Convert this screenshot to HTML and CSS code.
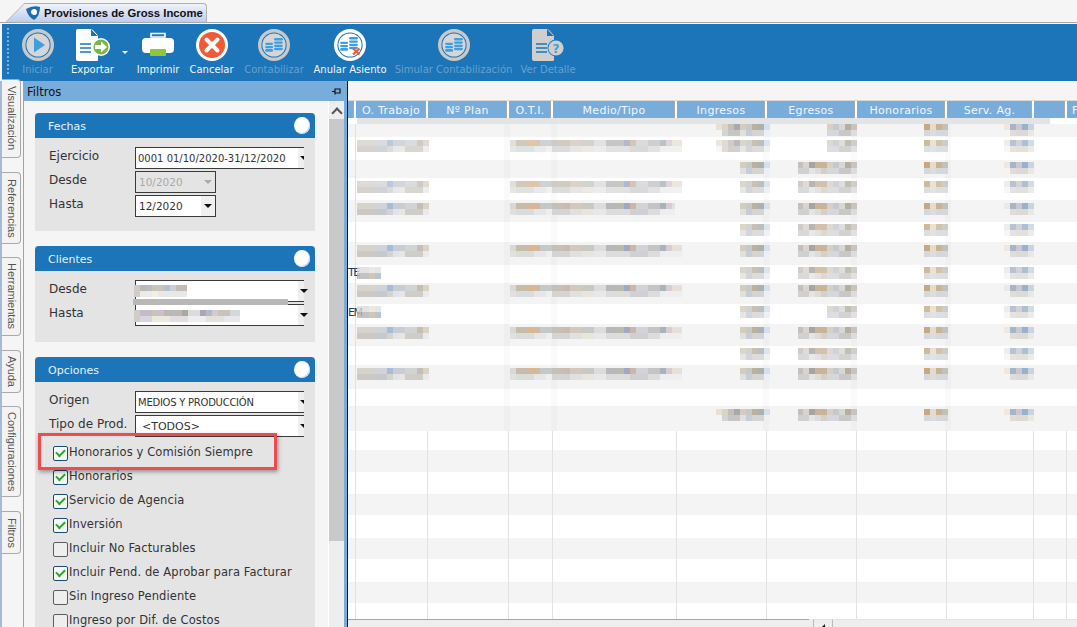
FILE: index.html
```html
<!DOCTYPE html>
<html lang="es">
<head>
<meta charset="utf-8">
<title>Provisiones de Gross Income</title>
<link rel="stylesheet" href="styles.css">
</head>
<body>
<svg class="defs" width="0" height="0" aria-hidden="true">
  <symbol id="coins" viewBox="0 0 20 18">
    <g fill="#3d9ee3">
      <rect x="0" y="6.4" width="9" height="2.6" rx="1.3"/><rect x="0" y="10" width="9" height="2.6" rx="1.3"/><rect x="0" y="13.6" width="9" height="3" rx="1.5"/>
      <rect x="10" y="1" width="10" height="3" rx="1.5"/><rect x="10" y="5" width="10" height="2.6" rx="1.3"/><rect x="10" y="8.6" width="10" height="2.6" rx="1.3"/><rect x="10" y="12.2" width="10" height="2.6" rx="1.3"/>
    </g>
  </symbol>
</svg>
<div class="app">
  <header class="tabbar">
    <div class="doc-tab">
      <svg class="tab-logo" viewBox="0 0 14 14"><path d="M0 3 Q7 -1 14 1 Q14 10 8 14 Q2 11 0 3Z" fill="#1c6fa8"/><path d="M5 5.5a3 3 0 1 1 3 3.5q-3-.5-3-3.5Z" fill="#fff"/></svg>
      <span>Provisiones de Gross Income</span>
    </div>
  </header>

  <nav class="toolbar">
    <div class="grip"></div>
    <div class="tool t-ini off">
      <svg viewBox="0 0 32 32"><circle cx="16" cy="16" r="16" fill="#c9c9c9"/><circle cx="16" cy="16" r="12.6" fill="#1c75b8"/><circle cx="16" cy="16" r="11.6" fill="#d6d6d6"/><path d="M12 8.5 23 16 12 23.5Z" fill="#3d9ee3"/></svg>
      <span>Iniciar</span>
    </div>
    <div class="tool t-exp">
      <svg viewBox="0 0 34 32"><path d="M2 0H15L22 7V31a1 1 0 0 1-1 1H2a2 2 0 0 1-2-2V2a2 2 0 0 1 2-2Z" fill="#fff"/><path d="M15 0 22 7H15Z" fill="#1c75b8"/><path d="M16 0.5 21.5 6.5" stroke="#fff"/><path d="M4 15H15M4 19H15M4 23H15" stroke="#1c75b8" stroke-width="1.4"/><circle cx="25" cy="18" r="9" fill="#fff"/><circle cx="25" cy="18" r="7.6" fill="#7ab648"/><path d="M19 16H25V12.5L31 18 25 23.5V20H19Z" fill="#fff"/></svg>
      <span>Exportar</span>
      <i class="caret"></i>
    </div>
    <div class="tool t-imp">
      <svg viewBox="0 0 32 32"><path d="M9 4.5H23V8H9Z" fill="none" stroke="#fff" stroke-width="1.6"/><rect x="0" y="9" width="32" height="15" rx="4" fill="#fff"/><rect x="8" y="20" width="16" height="7" rx="1" fill="#8dc63f"/></svg>
      <span>Imprimir</span>
    </div>
    <div class="tool t-can">
      <svg viewBox="0 0 32 32"><circle cx="16" cy="16" r="16" fill="#fff"/><circle cx="16" cy="16" r="13" fill="#f15a35"/><path d="M10.5 10.5 21.5 21.5M21.5 10.5 10.5 21.5" stroke="#fff" stroke-width="4" stroke-linecap="round"/></svg>
      <span>Cancelar</span>
    </div>
    <div class="tool t-con off">
      <svg viewBox="0 0 32 32"><circle cx="16" cy="16" r="16" fill="#c9c9c9"/><circle cx="16" cy="16" r="12.6" fill="#1c75b8"/><circle cx="16" cy="16" r="11.6" fill="#d6d6d6"/><use href="#coins" x="7" y="8" width="18" height="16"/></svg>
      <span>Contabilizar</span>
    </div>
    <div class="tool t-anu">
      <svg viewBox="0 0 32 32"><circle cx="16" cy="16" r="16" fill="#fff"/><circle cx="16" cy="16" r="12.6" fill="#1c75b8"/><circle cx="16" cy="16" r="11.6" fill="#fff"/><use href="#coins" x="6" y="7" width="18" height="16"/><path d="M19 19.5 25.5 25.5M25.5 19.5 19 25.5" stroke="#ef5a35" stroke-width="2.2"/></svg>
      <span>Anular Asiento</span>
    </div>
    <div class="tool t-sim off">
      <svg viewBox="0 0 32 32"><circle cx="16" cy="16" r="16" fill="#c9c9c9"/><circle cx="16" cy="16" r="12.6" fill="#1c75b8"/><circle cx="16" cy="16" r="11.6" fill="#d6d6d6"/><use href="#coins" x="7" y="8" width="18" height="16"/></svg>
      <span>Simular Contabilización</span>
    </div>
    <div class="tool t-ver off">
      <svg viewBox="0 0 32 32"><path d="M2 0H15L22 7V31a1 1 0 0 1-1 1H2a2 2 0 0 1-2-2V2a2 2 0 0 1 2-2Z" fill="#cfcfcf"/><path d="M15 0 22 7H15Z" fill="#1c75b8"/><path d="M16 0.5 21.5 6.5" stroke="#cfcfcf"/><path d="M4 15H15M4 19H15M4 23H15" stroke="#1c75b8" stroke-width="1.4"/><circle cx="24" cy="19" r="8.5" fill="#1c75b8"/><circle cx="24" cy="19" r="7.6" fill="#cfcfcf"/><text x="24" y="24" text-anchor="middle" class="qmark">?</text></svg>
      <span>Ver Detalle</span>
    </div>
  </nav>

  <main class="main">
    <aside class="side-tabs">
      <div class="vtab vt-vis">Visualización</div>
      <div class="vtab vt-ref">Referencias</div>
      <div class="vtab vt-her">Herramientas</div>
      <div class="vtab vt-ayu">Ayuda</div>
      <div class="vtab vt-cfg">Configuraciones</div>
      <div class="vtab vt-fil">Filtros</div>
    </aside>

    <section class="panel">
      <div class="panel-title">
        <span>Filtros</span>
        <svg class="pin" viewBox="0 0 9 9"><path d="M0 4.5H3M3 1.5V7.5M3 2H8V6H3" fill="none" stroke="#111" stroke-width="1.2"/></svg>
      </div>
      <div class="panel-body">
        <div class="cards">
          <div class="card card-fechas">
            <div class="card-head"><span>Fechas</span><i class="dot"></i></div>
            <div class="card-body">
              <div class="frow"><label>Ejercicio</label><div class="sel wide">0001 01/10/2020-31/12/2020<i class="drop"></i></div></div>
              <div class="frow"><label>Desde</label><div class="sel short disabled">10/2020<i class="drop"></i></div></div>
              <div class="frow"><label>Hasta</label><div class="sel short">12/2020<i class="drop"></i></div></div>
            </div>
          </div>

          <div class="card card-clientes">
            <div class="card-head"><span>Clientes</span><i class="dot"></i></div>
            <div class="card-body">
              <div class="frow"><label>Desde</label><div class="sel wide hidden-val"><b class="m m-c1"></b><i class="drop"></i></div></div>
              <div class="frow"><label>Hasta</label><div class="sel wide hidden-val"><b class="m m-c2"></b><i class="drop"></i></div></div>
              <div class="smudge"></div>
            </div>
          </div>

          <div class="card card-opciones">
            <div class="card-head"><span>Opciones</span><i class="dot"></i></div>
            <div class="card-body">
              <div class="frow"><label>Origen</label><div class="sel wide caps">MEDIOS Y PRODUCCIÓN<i class="drop"></i></div></div>
              <div class="frow"><label>Tipo de Prod.</label><div class="sel wide indent">&lt;TODOS&gt;<i class="drop"></i></div></div>
              <div class="checks">
                <div class="chk on">Honorarios y Comisión Siempre</div>
                <div class="chk on">Honorarios</div>
                <div class="chk on">Servicio de Agencia</div>
                <div class="chk on">Inversión</div>
                <div class="chk">Incluir No Facturables</div>
                <div class="chk on">Incluir Pend. de Aprobar para Facturar</div>
                <div class="chk">Sin Ingreso Pendiente</div>
                <div class="chk">Ingreso por Dif. de Costos</div>
              </div>
              <div class="callout"></div>
            </div>
          </div>
        </div>
        <div class="vscroll"><div class="vs-up"></div><div class="vs-thumb"></div></div>
      </div>
    </section>

    <div class="splitter"></div>

    <section class="grid">
      <div class="grid-head">
        <div></div><div>O. Trabajo</div><div>Nº Plan</div><div>O.T.I.</div><div>Medio/Tipo</div><div>Ingresos</div><div>Egresos</div><div>Honorarios</div><div>Serv. Ag.</div><div></div><div class="last">F</div>
      </div>
      <div class="grid-body">
        <div class="strip"></div>
        <div class="row g"><i></i><i></i><i></i><i class="c2"></i><i class="n"><b class="m ing wi"></b></i><i class="n"><b class="m egr se"></b></i><i class="n"><b class="m hon"></b></i><i class="n"><b class="m srv"></b></i><i></i><i></i></div>
        <div class="row w"><i></i><i><b class="m mt"></b></i><i></i><i class="c2"><b class="m mo"></b></i><i class="n"><b class="m ing wi"></b></i><i class="n"><b class="m egr se"></b></i><i class="n"><b class="m hon"></b></i><i class="n"><b class="m srv"></b></i><i></i><i></i></div>
        <div class="row g"><i></i><i></i><i></i><i class="c2"></i><i class="n"><b class="m ing"></b></i><i class="n"><b class="m egr"></b></i><i class="n"><b class="m hon"></b></i><i class="n"><b class="m srv"></b></i><i></i><i></i></div>
        <div class="row w"><i></i><i><b class="m mt"></b></i><i></i><i class="c2"><b class="m mo"></b></i><i class="n"><b class="m ing"></b></i><i class="n"><b class="m egr"></b></i><i class="n"><b class="m hon"></b></i><i class="n"><b class="m srv"></b></i><i></i><i></i></div>
        <div class="row g"><i></i><i><b class="m mt"></b></i><i></i><i class="c2"><b class="m mo sh"></b></i><i class="n"><b class="m ing"></b></i><i class="n"><b class="m egr"></b></i><i class="n"><b class="m hon"></b></i><i class="n"><b class="m srv"></b></i><i></i><i></i></div>
        <div class="row w"><i></i><i></i><i></i><i class="c2"></i><i class="n"><b class="m ing"></b></i><i class="n"><b class="m egr"></b></i><i class="n"><b class="m hon"></b></i><i class="n"><b class="m srv"></b></i><i></i><i></i></div>
        <div class="row g"><i></i><i><b class="m mt"></b></i><i></i><i class="c2"><b class="m mo"></b></i><i class="n"><b class="m ing"></b></i><i class="n"><b class="m egr"></b></i><i class="n"><b class="m hon"></b></i><i class="n"><b class="m srv"></b></i><i></i><i></i></div>
        <div class="row w"><i class="clip">TE</i><i><b class="m ms"></b></i><i></i><i class="c2"></i><i class="n"><b class="m ing"></b></i><i class="n"><b class="m egr"></b></i><i class="n"><b class="m hon"></b></i><i class="n"><b class="m srv"></b></i><i></i><i></i></div>
        <div class="row g"><i></i><i><b class="m mt"></b></i><i></i><i class="c2"><b class="m mo"></b></i><i class="n"><b class="m ing"></b></i><i class="n"><b class="m egr"></b></i><i class="n"><b class="m hon"></b></i><i class="n"><b class="m srv"></b></i><i></i><i></i></div>
        <div class="row w"><i class="clip">EM</i><i><b class="m ms"></b></i><i></i><i class="c2"></i><i class="n"><b class="m ing"></b></i><i class="n"><b class="m egr se"></b></i><i class="n"><b class="m hon"></b></i><i class="n"><b class="m srv"></b></i><i></i><i></i></div>
        <div class="row g"><i></i><i><b class="m mt"></b></i><i></i><i class="c2"><b class="m mo"></b></i><i class="n"><b class="m ing"></b></i><i class="n"><b class="m egr"></b></i><i class="n"><b class="m hon"></b></i><i class="n"><b class="m srv"></b></i><i></i><i></i></div>
        <div class="row w"><i></i><i></i><i></i><i class="c2"></i><i class="n"><b class="m ing"></b></i><i class="n"><b class="m egr"></b></i><i class="n"><b class="m hon"></b></i><i class="n"><b class="m srv"></b></i><i></i><i></i></div>
        <div class="row g"><i></i><i><b class="m mt"></b></i><i></i><i class="c2"><b class="m mo"></b></i><i class="n"><b class="m ing"></b></i><i class="n"><b class="m egr"></b></i><i class="n"><b class="m hon"></b></i><i class="n"><b class="m srv"></b></i><i></i><i></i></div>
        <div class="row w"><i></i><i></i><i></i><i class="c2"></i><i class="n"></i><i class="n"></i><i class="n"></i><i class="n"></i><i></i><i></i></div>
        <div class="row g"><i></i><i></i><i></i><i class="c2"></i><i class="n"><b class="m ing wi"></b></i><i class="n"><b class="m egr"></b></i><i class="n"><b class="m hon"></b></i><i class="n"><b class="m srv"></b></i><i></i><i></i></div>
        <div class="row w e"><i></i><i></i><i></i><i></i><i></i><i></i><i></i><i></i><i></i><i></i></div>
        <div class="row g e"><i></i><i></i><i></i><i></i><i></i><i></i><i></i><i></i><i></i><i></i></div>
        <div class="row w e"><i></i><i></i><i></i><i></i><i></i><i></i><i></i><i></i><i></i><i></i></div>
        <div class="row g e"><i></i><i></i><i></i><i></i><i></i><i></i><i></i><i></i><i></i><i></i></div>
        <div class="row w e"><i></i><i></i><i></i><i></i><i></i><i></i><i></i><i></i><i></i><i></i></div>
        <div class="row g e"><i></i><i></i><i></i><i></i><i></i><i></i><i></i><i></i><i></i><i></i></div>
        <div class="row w e"><i></i><i></i><i></i><i></i><i></i><i></i><i></i><i></i><i></i><i></i></div>
        <div class="row g e"><i></i><i></i><i></i><i></i><i></i><i></i><i></i><i></i><i></i><i></i></div>
        <div class="row w e"><i></i><i></i><i></i><i></i><i></i><i></i><i></i><i></i><i></i><i></i></div>
      </div>
      <div class="hscroll"><div class="hs-track"></div><div class="hs-btn"></div><div class="hs-thumb"></div></div>
    </section>
  </main>
</div>
</body>
</html>
```
FILE: styles.css
```css
* { box-sizing: border-box; }
html, body { margin: 0; height: 100%; overflow: hidden; }
body { background: #f5f5f5; font: 12px "DejaVu Sans", sans-serif; color: #333; }
.defs { position: absolute; }
.app { width: 1077px; height: 627px; display: flex; flex-direction: column; overflow: hidden; }

/* document tab */
.tabbar { height: 23px; padding: 3px 0 0 25px; border-bottom: 1px solid #a9a9a9; flex: none; }
.doc-tab { position: relative; width: 182px; height: 19px; display: flex; align-items: center; gap: 4px; padding-left: 1px;
  background: linear-gradient(#f0f3fa, #bccdec); border: 1px solid #b0b0b0; border-left: 0; border-bottom: 0; border-radius: 0 4px 0 0;
  font: bold 11.3px "Liberation Sans", sans-serif; color: #111; }
.doc-tab::before { content: ""; position: absolute; left: -10px; top: -1px; bottom: 0; width: 20px; z-index: 0;
  background: linear-gradient(#f0f3fa, #bccdec); border-left: 1px solid #b0b0b0; border-top: 1px solid #b0b0b0; transform: skewX(-45deg); }
.doc-tab > * { position: relative; z-index: 1; }
.tab-logo { width: 14px; height: 14px; flex: none; }

/* toolbar */
.toolbar { height: 57px; flex: none; margin: 1px 0 0 2px; background: #1c75b8; display: flex; padding-left: 19px; gap: 11px; position: relative; color: #eef5fb; font: 10px "DejaVu Sans", sans-serif; }
.grip { position: absolute; left: 5px; top: 4px; bottom: 6px; width: 2px; background: repeating-linear-gradient(#7cb0da 0 2px, transparent 2px 4px); }
.tool { position: relative; display: flex; flex-direction: column; align-items: center; padding-top: 5px; white-space: nowrap; }
.tool svg { width: 32px; height: 32px; flex: none; }
.tool span { margin-top: 2px; line-height: 14px; }
.tool.off { color: #6a9fce; }
.t-ini { width: 33px; margin-right: 5px; }
.t-exp { width: 45px; margin-right: 11px; }
.t-exp svg { width: 34px; }
.t-imp { width: 42px; }
.t-can { width: 43px; }
.t-con { width: 60px; }
.t-anu { width: 70px; }
.t-sim { width: 115px; margin-right: -1px; }
.t-ver { width: 54px; }
.caret { position: absolute; left: 52px; top: 27px; border: 3px solid transparent; border-top: 3px solid #fff; border-bottom: 0; }
.qmark { font: bold 12px "DejaVu Sans", sans-serif; fill: #3d9ee3; }

/* main */
.main { flex: 1; min-height: 0; display: flex; }
.side-tabs { width: 23px; flex: none; position: relative; border-left: 2px solid #a6bad6; }
.vtab { position: absolute; left: 0; width: 19px; writing-mode: vertical-rl; text-align: center; font: 11px "Liberation Sans", sans-serif; color: #555; background: #f3f3f3;
  border: 1px solid #a9a9a9; border-left: 0; border-radius: 0 4px 4px 0; line-height: 17px; }
.vt-vis { top: -2px; height: 79px; }
.vt-ref { top: 91px; height: 72px; }
.vt-her { top: 176px; height: 79px; }
.vt-ayu { top: 269px; height: 43px; }
.vt-cfg { top: 325px; height: 91px; }
.vt-fil { top: 430px; height: 43px; }

.panel { width: 321px; flex: none; display: flex; flex-direction: column; border-left: 1px solid #78acdb; }
.panel-title { height: 20px; flex: none; background: #78acdb; display: flex; align-items: center; justify-content: space-between; padding: 1px 3px 0 3px; color: #111; font: 11.5px "DejaVu Sans", sans-serif; }
.pin { width: 9px; height: 9px; }
.panel-body { flex: 1; min-height: 0; display: flex; overflow: hidden; }
.cards { flex: 1; min-width: 0; padding: 12px 13px 0 11px; display: flex; flex-direction: column; gap: 15px; }
.card { background: #e4e4e4; flex: none; }
.card-fechas { height: 118px; }
.card-clientes { height: 96px; }
.card-opciones { height: 300px; }
.card-head { height: 25px; background: #1c75b8; border-radius: 4px 4px 0 0; display: flex; align-items: center; justify-content: space-between; padding: 1px 5px 0 13px; color: #e8f3fb; font-size: 11px; }
.dot { width: 16px; height: 17px; border-radius: 50%; background: #fff; box-shadow: inset -1px -1px 0 #c8d8e8; margin-top: -2px; }
.card-body { position: relative; padding: 9px 11px 0 14px; }
.frow { display: flex; height: 24px; align-items: flex-start; }
.frow label { width: 86px; flex: none; line-height: 18px; color: #333; }
.sel { position: relative; height: 22px; border: 1px solid #3a3a3a; border-right: 0; background: #fff; line-height: 21px; padding-left: 2px; font-size: 10px; color: #333; white-space: nowrap; overflow: hidden; }
.sel.wide { width: 169px; }
.sel.short { width: 81px; border-right: 1px solid #3a3a3a; padding-left: 3px; font-size: 10.5px; }
.sel.caps { letter-spacing: -.25px; }
.sel.indent { padding-left: 6px; font-size: 11px; }
.sel.disabled { background: #e4e4e4; color: #aaa; }
.drop { position: absolute; right: 0; top: 0; bottom: 0; width: 6px; background: #f0f0f0; }
.drop::after { content: ""; position: absolute; left: 2px; top: 8px; border: 4px solid transparent; border-top: 4px solid #111; border-bottom: 0; }
.sel.short .drop { width: 14px; }
.sel.short .drop::after { left: 3px; }
.sel.disabled .drop { background: #e4e4e4; }
.sel.disabled .drop::after { border-top-color: #aaa; }
.hidden-val { overflow: visible; padding: 0; }
.smudge { position: absolute; left: 98px; top: 28px; width: 155px; height: 6px; background: #b8b8b8; }
.checks { padding: 6px 0 0 4px; }
.chk { position: relative; height: 24px; padding-left: 16px; line-height: 15px; font-size: 11.5px; letter-spacing: .1px; color: #333; white-space: nowrap; }
.chk::before { content: ""; position: absolute; left: 0; top: 1px; width: 13px; height: 13px; border: 1px solid #5c5c5c; border-radius: 2px; background: #eee; }
.chk.on::before { border-color: #1d4a70; background: #f4f8f4; }
.chk.on::after { content: ""; position: absolute; left: 3px; top: 4px; width: 7px; height: 4px; border-left: 2px solid #2aa52a; border-bottom: 2px solid #2aa52a; transform: rotate(-45deg); }
.callout { position: absolute; left: 3px; top: 51px; width: 239px; height: 37px; border: 3px solid #f04b4f; box-shadow: 1px 2px 4px rgba(0,0,0,.35); }

.vscroll { width: 16px; flex: none; background: #eee; border-left: 1px solid #fff; display: flex; flex-direction: column; }
.vs-up { height: 18px; flex: none; position: relative; }
.vs-up::after { content: ""; position: absolute; left: 4px; top: 8px; width: 6px; height: 6px; border-left: 2px solid #555; border-top: 2px solid #555; transform: rotate(45deg); }
.vs-thumb { height: 422px; background: #c9c9c9; }

.splitter { width: 4px; flex: none; background: #78acdb; border-right: 1px solid #111; }

/* grid */
.grid { flex: 1; min-width: 0; display: flex; flex-direction: column; padding-top: 19px; overflow: hidden; }
.grid-head { height: 18px; flex: none; display: grid; grid-template-columns: 8px 72px 81px 44px 124px 90px 90px 90px 87px 33px 60px; background: #78acdb; color: #f0f6fb; border-top: 1px solid #d8d8d8; font-size: 11px; letter-spacing: .3px; }
.grid-head div { text-align: center; line-height: 19px; border-right: 2px solid; border-right-color: #fff; box-shadow: inset -1px 0 0 #a9a9a9; white-space: nowrap; overflow: hidden; }
.grid-head .last { text-align: left; padding-left: 5px; }
.grid-body { flex: 1; min-height: 0; display: grid; grid-template-rows: 6px 13px 23px 18px 22px 22px 20px 23px 18px 21px 20px 22px 19px 24px 17px 25px 19px 22px 22px 21px 23px 21px 23px 21px 16px; background: #fff; }
.strip { margin-left: 9px; width: 693px; background: #e4e4e4; }
.row { display: grid; grid-template-columns: 8px 72px 81px 44px 124px 90px 90px 90px 87px 33px; align-items: center;
  background-image: linear-gradient(90deg, transparent 156px, rgba(0,0,0,.02) 156px 162px, transparent 162px 203px, rgba(0,0,0,.02) 203px 209px, transparent 209px 415px, rgba(0,0,0,.02) 415px 421px, transparent 421px 503px, rgba(0,0,0,.02) 503px 509px, transparent 509px 597px, rgba(0,0,0,.02) 597px 603px, transparent 603px); }
.row.g { background-color: #f4f4f4; }
.row.w { background-color: #fff; }
.row.e { background-image: none; align-items: stretch; }
.row i { display: flex; height: 100%; align-items: center; font-style: normal; }
.row > i:first-child, .row.e i { border-right: 1px solid #e2e2e2; }
.row > i:last-child { border-right: 1px solid #e2e2e2; }
.row .c2 { grid-column: span 2; }
.row .n { justify-content: flex-end; }
.clip { font-size: 11px; letter-spacing: -1.5px; color: #2a3a5a; white-space: nowrap; }

/* pixelated, blurred values */
.m { display: block; height: 12px; flex: none; background-repeat: no-repeat; background-size: 100% 6px; background-position: 0 0, 0 6px; position: relative; }
.row.w .m { opacity: .8; }
.mt { width: 72px; margin-left: 1px; background-image:
  linear-gradient(90deg, #d6d2cc 0 12px, #d4d4cc 12px 18px, #d0d4d8 18px 30px, #a8bcd8 30px 36px, #c8ccd4 36px 48px, #d0d4d4 48px 60px, #c4beb6 60px 66px, #dcd2c4 66px),
  linear-gradient(90deg, #cdc8c4 0 18px, #c6c9cb 18px 30px, #d6d2cc 30px 36px, #e2e2ea 36px 42px, #e8e6e2 42px 48px, #d0ccc8 48px 66px, #e8eaee 66px); }
.ms { width: 24px; margin-left: 1px; background-image:
  linear-gradient(90deg, #dcdcdc 0 12px, #e6e4e2 12px 18px, #e0e0e0 18px),
  linear-gradient(90deg, #b4b4b4 0 12px, #c8b8a0 12px 18px, #a8b8c8 18px); }
.mo { width: 172px; margin-left: 1px; background-image:
  linear-gradient(90deg, #d8d8d4 0 6px, #c8bca8 6px 18px, #d4b898 18px 30px, #c4c8c8 30px 42px, #c4c0b8 42px 54px, #c8bcb0 54px 60px, #d4c8bc 60px 72px, #c8c8c4 72px 84px, #dcdcdc 84px 96px, #b8b8b8 96px 108px, #b8bcb0 108px 114px, #a0a8c4 114px 120px, #d0b4a4 120px 126px, #d0d4d8 126px 138px, #c4c4c4 138px 150px, #a8b4bc 150px 156px, #d8ccd4 156px 162px, #e8e0d8 162px),
  linear-gradient(90deg, #e0e0e0 0 6px, #d8dcdc 6px 24px, #e4e6e8 24px 36px, #f0eeec 36px 42px, #d4d4d4 42px 60px, #e0e0e0 60px 72px, #e8e6dc 72px 84px, #e8e8e8 84px 96px, #dcdcdc 96px 120px, #d0d0d4 120px 138px, #dcdcdc 138px 150px, #eeeef0 150px); }
.mo.sh { width: 165px; }
.ing { width: 30px; margin-right: -3px; background-image:
  linear-gradient(270deg, #d4e0ee 0 6px, #aeb0ac 6px 12px, #bcb0a0 12px 18px, #c8c8c4 18px 24px, #d4ccbc 24px 30px, #a8a8b0 30px 36px, #c4c0b8 36px 42px, #d8d4c8 42px 48px, #e8e0d8 48px),
  linear-gradient(270deg, #eaf0f6 0 6px, #d4d4d4 6px 18px, #c8ccd4 18px 24px, #e0e0de 24px 30px, #c8c4c4 30px 42px, #d4d4d4 42px 48px, #f4f4f4 48px); }
.ing.wi { width: 54px; }
.egr { width: 59px; background-image:
  linear-gradient(270deg, #c8c4bc 0 6px, #b4aea4 6px 12px, #d8d8d0 12px 18px, #c4c8d0 18px 24px, #d8d0c4 24px 30px, #c8b498 30px 42px, #a8a4a0 42px 48px, #d8d4ce 48px 54px, #c4c0c0 54px),
  linear-gradient(270deg, #dcdcdc 0 6px, #c8c8c8 6px 18px, #d4d8dc 18px 30px, #d4d0c8 30px 36px, #dcdcdc 36px 42px, #e4e4e4 42px 48px, #d0d0d0 48px); }
.egr.se { width: 30px; }
.hon { width: 24px; margin-right: -1px; background-image:
  linear-gradient(270deg, #c4c0b8 0 6px, #c8b494 6px 12px, #e8dcc8 12px 18px, #c4a888 18px),
  linear-gradient(270deg, #d4d8dc 0 12px, #dcdcdc 12px 18px, #d4d8dc 18px); }
.srv { width: 30px; background-image:
  linear-gradient(270deg, #c8d4e0 0 6px, #9cb0c8 6px 12px, #c8c8d4 12px 18px, #a8b4c8 18px 24px, #f0e8e0 24px),
  linear-gradient(270deg, #e8e8e4 0 6px, #dcdad6 6px 18px, #e0dcd8 18px 24px, #f4f4f4 24px); }
.m-c1 { position: absolute; left: -2px; top: 4px; width: 53px; background-image:
  linear-gradient(90deg, #d0ccc8 0 6px, #bcb8b4 6px 12px, #b8bcc4 12px 18px, #c8c4b8 18px 30px, #b0c0cc 30px 36px, #c8d0d8 36px 42px, #c4bcb4 42px),
  linear-gradient(90deg, #d0ccc8 0 6px, #ecebe9 6px 18px, #f0f0e4 18px 24px, #e8e8e8 24px); }
.m-c2 { position: absolute; left: -2px; top: 5px; width: 106px; background-image:
  linear-gradient(90deg, #d0ccc8 0 6px, #c4bcc8 6px 18px, #c8c4b8 18px 24px, #d0bcd0 24px 30px, #bcb8b4 30px 48px, #a8a8a4 48px 54px, #dcdcdc 54px 66px, #a8a8b8 66px 72px, #b0bccc 72px 78px, #d8c8d4 78px 84px, #c8c4bc 84px 96px, #d4d8d8 96px),
  linear-gradient(90deg, #d0ccc8 0 6px, #dcd4dc 6px 18px, #ece8dc 18px 36px, #e4dce0 36px 54px, #eeeeee 54px 72px, #e4e0dc 72px 90px, #e8e8ec 90px); }
.hscroll { height: 8px; flex: none; display: flex; background: #eee; position: relative; }
.hs-track { width: 461px; border-top: 1px solid #a6a6a6; }
.hs-btn { width: 20px; margin-left: 4px; border-left: 1px solid #bbb; border-right: 1px solid #bbb; background: #eee; border-top: 1px solid #e4e4e4; position: relative; }
.hs-btn::after { content: ""; position: absolute; left: 7px; top: 4px; border: 2px solid #111; border-top-color: transparent; border-left-color: transparent; }
.hs-thumb { flex: 1; margin-left: 2px; background: #eee; border-top: 1px solid #e4e4e4; }
```
